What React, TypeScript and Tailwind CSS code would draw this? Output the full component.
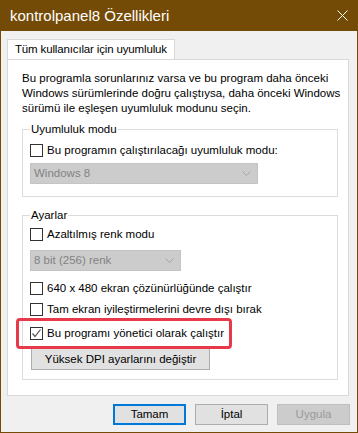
import React from "react";

const font = { fontFamily: '"Liberation Sans", Arial, sans-serif' };

function Box({ checked }: { checked?: boolean }) {
  return (
    <div className="w-[13px] h-[13px] border border-[#333333] bg-white flex items-center justify-center shrink-0">
      {checked && (
        <svg width="11" height="11" viewBox="0 0 11 11">
          <path d="M1.5 5.5 L4 8.5 L9.5 1.5" fill="none" stroke="#555555" strokeWidth="1.2" />
        </svg>
      )}
    </div>
  );
}

function Check({ label, checked, className = "" }: { label: string; checked?: boolean; className?: string }) {
  return (
    <div className={`flex items-center gap-[4px] h-[13px] ${className}`}>
      <Box checked={checked} />
      <span className="text-[11.5px] leading-[15px] text-black whitespace-nowrap">{label}</span>
    </div>
  );
}

function Select({ value, w, className = "" }: { value: string; w: string; className?: string }) {
  return (
    <div className={`${w} h-[21px] bg-[#cccccc] border border-[#c4c4c4] flex items-center justify-between pl-[3px] pr-[6px] ${className}`}>
      <span className="text-[11.5px] leading-[15px] text-[#838383]">{value}</span>
      <svg width="9" height="6" viewBox="0 0 9 6">
        <path d="M0.5 0.5 L4.5 4.5 L8.5 0.5" fill="none" stroke="#a6a6a6" strokeWidth="1" />
      </svg>
    </div>
  );
}

function Btn({ label, variant }: { label: string; variant?: "def" | "off" }) {
  const cls =
    variant === "def"
      ? "border-2 border-[#0078d7] bg-[#e1e1e1] text-black"
      : variant === "off"
      ? "border border-[#bfbfbf] bg-[#cccccc] text-[#9a9a9a]"
      : "border border-[#adadad] bg-[#e1e1e1] text-black";
  return (
    <div className={`w-[73px] h-[21px] flex items-center justify-center text-[11.5px] leading-[15px] ${cls}`}>
      {label}
    </div>
  );
}

export default function App() {
  return (
    <div style={font} className="w-[358px] h-[433px] bg-[#f0f0f0] border-x border-b border-[#744b06] flex flex-col">
      {/* title bar */}
      <div className="h-[31px] -mx-px bg-[#744b06] flex items-center justify-between pl-[10px] pr-[10px] shrink-0">
        <span className="text-white text-[15px] leading-[18px]">kontrolpanel8 Özellikleri</span>
        <svg width="11" height="11" viewBox="0 0 11 11">
          <path d="M0.5 0.5 L10.5 10.5 M10.5 0.5 L0.5 10.5" stroke="#ffffff" strokeWidth="1" />
        </svg>
      </div>

      {/* tab */}
      <div className="self-start ml-[6px] mt-[8px] h-[20px] bg-white border border-b-0 border-[#d9d9d9] px-[7px] flex items-center">
        <span className="text-[11.5px] leading-[15px] tracking-[-0.15px] text-black whitespace-nowrap">Tüm kullanıcılar için uyumluluk</span>
      </div>

      {/* panel */}
      <div className="relative ml-[6px] w-[342px] h-[337px] bg-white border border-[#d9d9d9] pl-[14px] pt-[11px]">
        <p className="text-[11.5px] leading-[15px] text-black whitespace-nowrap">
          Bu programla sorunlarınız varsa ve bu program daha önceki
          <br />
          Windows sürümlerinde doğru çalıştıysa, daha önceki Windows
          <br />
          sürümü ile eşleşen uyumluluk modunu seçin.
        </p>

        <fieldset className="mt-[6px] w-[316px] h-[75px] border border-[#dcdcdc] px-[7px]">
          <legend className="px-[1px] text-[11.5px] leading-[15px] text-black">Uyumluluk modu</legend>
          <Check className="mt-[7px]" label="Bu programın çalıştırılacağı uyumluluk modu:" />
          <Select className="mt-[6px]" w="w-[228px]" value="Windows 8" />
        </fieldset>

        <fieldset className="mt-[11px] w-[316px] h-[172px] border border-[#dcdcdc] px-[7px]">
          <legend className="px-[1px] text-[11.5px] leading-[15px] text-black">Ayarlar</legend>
          <Check className="mt-[5px]" label="Azaltılmış renk modu" />
          <Select className="mt-[9px]" w="w-[151px]" value="8 bit (256) renk" />
          <Check className="mt-[11px]" label="640 x 480 ekran çözünürlüğünde çalıştır" />
          <Check className="mt-[8px]" label="Tam ekran iyileştirmelerini devre dışı bırak" />
          <Check className="mt-[11px]" checked label="Bu programı yönetici olarak çalıştır" />
          <div className="mt-[8px] ml-px w-[179px] h-[22px] bg-[#e1e1e1] border border-[#adadad] flex items-center justify-center text-[11.5px] leading-[15px] text-black">
            Yüksek DPI ayarlarını değiştir
          </div>
        </fieldset>

        {/* red annotation */}
        <div className="absolute left-[8px] top-[258px] w-[216px] h-[31px] border-[3px] border-[#e8394a] rounded-[4px]" />
      </div>

      {/* buttons */}
      <div className="flex justify-end gap-[9px] pr-[7px] mt-[8px]">
        <Btn label="Tamam" variant="def" />
        <Btn label="İptal" />
        <Btn label="Uygula" variant="off" />
      </div>
    </div>
  );
}
